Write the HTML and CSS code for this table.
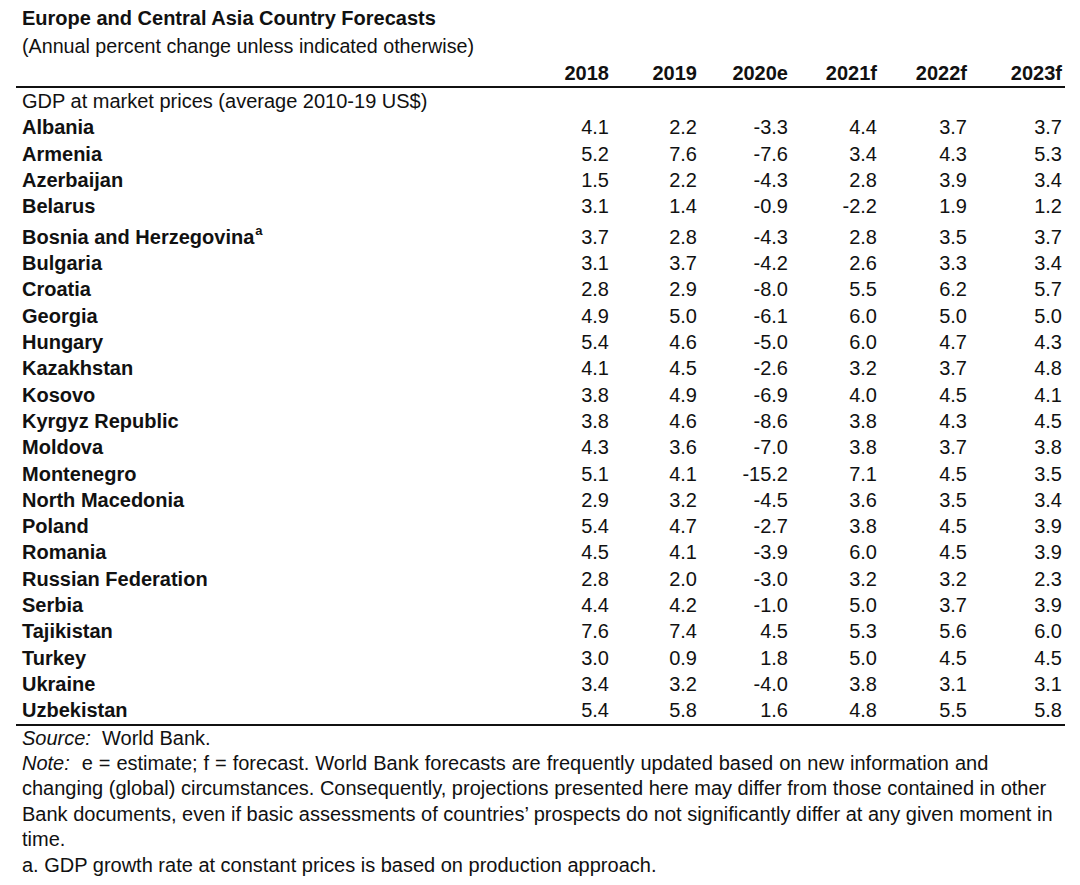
FILE: index.html
```html
<!DOCTYPE html>
<html lang="en">
<head>
<meta charset="utf-8">
<title>Europe and Central Asia Country Forecasts</title>
<link rel="stylesheet" href="styles.css">
</head>
<body>
<div class="page">
  <div class="title">Europe and Central Asia Country Forecasts</div>
  <div class="subtitle">(Annual percent change unless indicated otherwise)</div>
  <table class="data">
    <colgroup>
      <col class="c-name"><col class="c1"><col class="c2"><col class="c3"><col class="c4"><col class="c5"><col class="c6">
    </colgroup>
    <thead>
      <tr class="head"><th></th><th>2018</th><th>2019</th><th>2020e</th><th>2021f</th><th>2022f</th><th>2023f</th></tr>
    </thead>
    <tbody>
      <tr class="group"><td colspan="7">GDP at market prices (average 2010-19 US$)</td></tr>
      <tr><td>Albania</td><td>4.1</td><td>2.2</td><td>-3.3</td><td>4.4</td><td>3.7</td><td>3.7</td></tr>
      <tr><td>Armenia</td><td>5.2</td><td>7.6</td><td>-7.6</td><td>3.4</td><td>4.3</td><td>5.3</td></tr>
      <tr><td>Azerbaijan</td><td>1.5</td><td>2.2</td><td>-4.3</td><td>2.8</td><td>3.9</td><td>3.4</td></tr>
      <tr><td>Belarus</td><td>3.1</td><td>1.4</td><td>-0.9</td><td>-2.2</td><td>1.9</td><td>1.2</td></tr>
      <tr class="tall"><td>Bosnia and Herzegovina<sup class="fn">a</sup></td><td>3.7</td><td>2.8</td><td>-4.3</td><td>2.8</td><td>3.5</td><td>3.7</td></tr>
      <tr><td>Bulgaria</td><td>3.1</td><td>3.7</td><td>-4.2</td><td>2.6</td><td>3.3</td><td>3.4</td></tr>
      <tr><td>Croatia</td><td>2.8</td><td>2.9</td><td>-8.0</td><td>5.5</td><td>6.2</td><td>5.7</td></tr>
      <tr><td>Georgia</td><td>4.9</td><td>5.0</td><td>-6.1</td><td>6.0</td><td>5.0</td><td>5.0</td></tr>
      <tr><td>Hungary</td><td>5.4</td><td>4.6</td><td>-5.0</td><td>6.0</td><td>4.7</td><td>4.3</td></tr>
      <tr><td>Kazakhstan</td><td>4.1</td><td>4.5</td><td>-2.6</td><td>3.2</td><td>3.7</td><td>4.8</td></tr>
      <tr><td>Kosovo</td><td>3.8</td><td>4.9</td><td>-6.9</td><td>4.0</td><td>4.5</td><td>4.1</td></tr>
      <tr><td>Kyrgyz Republic</td><td>3.8</td><td>4.6</td><td>-8.6</td><td>3.8</td><td>4.3</td><td>4.5</td></tr>
      <tr><td>Moldova</td><td>4.3</td><td>3.6</td><td>-7.0</td><td>3.8</td><td>3.7</td><td>3.8</td></tr>
      <tr><td>Montenegro</td><td>5.1</td><td>4.1</td><td>-15.2</td><td>7.1</td><td>4.5</td><td>3.5</td></tr>
      <tr><td>North Macedonia</td><td>2.9</td><td>3.2</td><td>-4.5</td><td>3.6</td><td>3.5</td><td>3.4</td></tr>
      <tr><td>Poland</td><td>5.4</td><td>4.7</td><td>-2.7</td><td>3.8</td><td>4.5</td><td>3.9</td></tr>
      <tr><td>Romania</td><td>4.5</td><td>4.1</td><td>-3.9</td><td>6.0</td><td>4.5</td><td>3.9</td></tr>
      <tr><td>Russian Federation</td><td>2.8</td><td>2.0</td><td>-3.0</td><td>3.2</td><td>3.2</td><td>2.3</td></tr>
      <tr><td>Serbia</td><td>4.4</td><td>4.2</td><td>-1.0</td><td>5.0</td><td>3.7</td><td>3.9</td></tr>
      <tr><td>Tajikistan</td><td>7.6</td><td>7.4</td><td>4.5</td><td>5.3</td><td>5.6</td><td>6.0</td></tr>
      <tr><td>Turkey</td><td>3.0</td><td>0.9</td><td>1.8</td><td>5.0</td><td>4.5</td><td>4.5</td></tr>
      <tr><td>Ukraine</td><td>3.4</td><td>3.2</td><td>-4.0</td><td>3.8</td><td>3.1</td><td>3.1</td></tr>
      <tr class="last"><td>Uzbekistan</td><td>5.4</td><td>5.8</td><td>1.6</td><td>4.8</td><td>5.5</td><td>5.8</td></tr>
    </tbody>
  </table>
  <div class="notes">
    <p class="line"><em>Source:</em>&nbsp; World Bank.</p>
    <p class="line wide"><em>Note:</em>&nbsp; e = estimate; f = forecast. World Bank forecasts are frequently updated based on new information and</p>
    <p class="line">changing (global) circumstances. Consequently, projections presented here may differ from those contained in other</p>
    <p class="line">Bank documents, even if basic assessments of countries’ prospects do not significantly differ at any given moment in</p>
    <p class="line">time.</p>
    <p class="line">a. GDP growth rate at constant prices is based on production approach.</p>
  </div>
</div>
</body>
</html>
```

FILE: styles.css
```css
html, body {
  margin: 0;
  padding: 0;
  background: #ffffff;
}

body {
  font-family: "Liberation Sans", Arial, sans-serif;
  font-size: 20px;
  color: #111111;
}

.page {
  padding: 4px 0 0 16px;
  width: 1049px;
}

.title {
  font-weight: bold;
  line-height: 28px;
  padding-left: 6px;
}

.subtitle {
  font-size: 19.7px;
  line-height: 28px;
  padding-left: 6px;
}

.data {
  border-collapse: collapse;
  width: 1049px;
  table-layout: fixed;
}

.c-name { width: 504px; }
.c1 { width: 89px; }
.c2 { width: 88px; }
.c3 { width: 91px; }
.c4 { width: 89px; }
.c5 { width: 90px; }
.c6 { width: 98px; }

.data th,
.data td {
  padding: 0;
  height: 26.3px;
  line-height: 26.3px;
  text-align: right;
  white-space: nowrap;
  vertical-align: bottom;
}

.data th:last-child,
.data td:last-child {
  padding-right: 3px;
}

.data td:first-child {
  text-align: left;
  font-weight: bold;
  padding-left: 6px;
}

.data .head th {
  font-weight: bold;
  height: 26px;
  line-height: 26px;
  border-bottom: 2px solid #111111;
}

.data .group td:first-child {
  font-weight: normal;
}

.data .tall td {
  height: 30.7px;
}

.data .last td {
  border-bottom: 2px solid #111111;
}

.fn {
  font-size: 13px;
  line-height: 0;
  vertical-align: 9px;
  margin-left: 1px;
}

.notes {
  padding-left: 6px;
  padding-top: 0;
}

.line {
  margin: 0;
  line-height: 25.4px;
  white-space: nowrap;
}

.line.wide {
  word-spacing: 0.4px;
}

.line em {
  font-style: italic;
}
```
